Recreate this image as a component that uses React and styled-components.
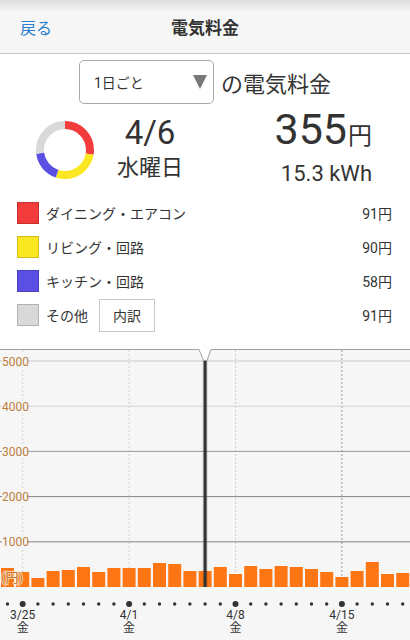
import React from 'react';
import styled, { createGlobalStyle } from 'styled-components';

const GlobalStyle = createGlobalStyle`
  html, body {
    margin: 0;
    padding: 0;
    background: #fff;
  }
  body {
    font-family: Roboto, "Noto Sans CJK JP", sans-serif;
    color: #333;
  }
`;

const Page = styled.div`
  width: 410px;
  height: 640px;
  overflow: hidden;
  display: flex;
  flex-direction: column;
  background: #fff;
`;

const Header = styled.header`
  height: 53px;
  flex-shrink: 0;
  display: grid;
  grid-template-columns: 1fr auto 1fr;
  align-items: center;
  background: linear-gradient(#dcdcdc, #f6f6f6 12px, #f7f7f7);
  border-bottom: 1px solid #c8c8c8;
`;

const BackLink = styled.a`
  justify-self: start;
  padding-left: 20px;
  font-size: 16px;
  color: #2b7fcf;
  text-decoration: none;
`;

const Title = styled.h1`
  margin: 0;
  font-size: 17px;
  font-weight: bold;
  color: #333;
`;

const PeriodRow = styled.div`
  display: flex;
  justify-content: center;
  align-items: center;
  gap: 7px;
  padding-top: 6px;
`;

const Select = styled.div`
  width: 135px;
  height: 44px;
  box-sizing: border-box;
  display: flex;
  align-items: center;
  justify-content: space-between;
  padding: 0 6px 0 14px;
  border: 1px solid #aaa;
  border-radius: 5px;
  font-size: 14px;
  color: #333;
`;

const Caret = styled.span`
  width: 0;
  height: 0;
  border-left: 7px solid transparent;
  border-right: 7px solid transparent;
  border-top: 14px solid #777;
`;

const PeriodLabel = styled.span`
  font-size: 22px;
  color: #333;
`;

const Summary = styled.section`
  height: 92px;
  display: flex;
  align-items: center;
  padding-left: 36px;
`;

const DateBlock = styled.div`
  width: 112px;
  display: flex;
  flex-direction: column;
  align-items: center;
  line-height: 1;
`;

const DateNum = styled.div`
  font-size: 33px;
  margin-top: -6px;
`;

const Weekday = styled.div`
  font-size: 22px;
  margin-top: 8px;
`;

const CostBlock = styled.div`
  flex: 1;
  display: flex;
  flex-direction: column;
  align-items: flex-end;
  padding-right: 38px;
  line-height: 1;
`;

const Cost = styled.div`
  font-size: 43px;
  margin-top: -8px;
`;

const Unit = styled.span`
  font-size: 24px;
  margin-left: 1px;
`;

const Energy = styled.div`
  font-size: 22px;
  margin-top: 12px;
`;

const Legend = styled.ul`
  list-style: none;
  margin: 0;
  padding: 0;
`;

const LegendRow = styled.li`
  height: 34px;
  display: flex;
  align-items: center;
  padding: 0 18px 0 17px;
  font-size: 14px;
`;

const Swatch = styled.span`
  width: 22px;
  height: 22px;
  box-sizing: border-box;
  background: ${p => p.$color};
  border: 1px solid rgba(0, 0, 0, 0.18);
`;

const Label = styled.span`
  margin-left: 7px;
`;

const Value = styled.span`
  margin-left: auto;
`;

const DetailButton = styled.button`
  margin-left: 11px;
  width: 56px;
  height: 33px;
  background: #fff;
  border: 1px solid #c8c8c8;
  border-radius: 0;
  font-family: inherit;
  font-size: 14px;
  color: #333;
  padding: 0;
`;

const ChartWrap = styled.div`
  margin-top: 17px;
  flex: 1;
`;

const ChartSvg = styled.svg`
  display: block;
  font-family: Roboto, "Noto Sans CJK JP", sans-serif;
`;

const parts = [
  { name: 'ダイニング・エアコン', color: '#f23b3b', value: 91 },
  { name: 'リビング・回路', color: '#fbe822', value: 90 },
  { name: 'キッチン・回路', color: '#5b4fe3', value: 58 },
  { name: 'その他', color: '#d9d9d9', value: 91, detail: true },
];

function Donut() {
  const r = 25;
  const c = 2 * Math.PI * r;
  const total = parts.reduce((s, p) => s + p.value, 0);
  let offset = 0;
  return (
    <svg width="58" height="58" viewBox="0 0 58 58">
      <g transform="rotate(-90 29 29)">
        {parts.map(p => {
          const len = (p.value / total) * c;
          const el = (
            <circle
              key={p.name}
              cx="29"
              cy="29"
              r={r}
              fill="none"
              stroke={p.color}
              strokeWidth="8"
              strokeDasharray={`${len} ${c - len}`}
              strokeDashoffset={-offset}
            />
          );
          offset += len;
          return el;
        })}
      </g>
    </svg>
  );
}

// daily cost in yen, from 3/24
const daily = [420, 330, 200, 355, 380, 445, 330, 420, 420, 420, 530, 510, 355, 355, 445, 290, 465, 400, 465, 445, 400, 330, 220, 355, 555, 290, 310];
const marks = { 1: ['3/25', '金'], 8: ['4/1', '金'], 15: ['4/8', '金'], 22: ['4/15', '金'] };
const selected = 13;
const ticks = [
  { v: 5000, color: '#c9c9c9' },
  { v: 4000, color: '#d2d2d2' },
  { v: 3000, color: '#9a9a9a' },
  { v: 2000, color: '#858585' },
  { v: 1000, color: '#858585' },
];

function Chart() {
  const base = 238;
  const scale = 45.2 / 1000;
  const step = 15.2;
  const cx = i => 7.5 + step * i;
  return (
    <ChartSvg width="410" height="291" viewBox="0 0 410 291">
      <path d="M0 0.5 H199 L203.5 11.5 H207 L211 0.5 H410 V291 H0 Z" fill="#f6f6f6" />
      {Object.keys(marks).map(k => (
        <line
          key={k}
          x1={cx(+k)}
          x2={cx(+k)}
          y1="1"
          y2={base}
          stroke={k === '22' ? '#999' : '#cfcfcf'}
          strokeDasharray="2 2"
        />
      ))}
      {ticks.map(t => {
        const y = base - t.v * scale;
        return (
          <g key={t.v}>
            <line x1="0" x2="410" y1={y} y2={y} stroke={t.color} />
            <rect x="2" y={y - 7} width="25" height="14" fill="#f6f6f6" />
            <text x="2" y={y + 4.5} fontSize="12" fill="#bd7d3c">{t.v}</text>
          </g>
        );
      })}
      {daily.map((v, i) => {
        const h = Math.round(v * scale);
        return <rect key={i} x={1 + step * i} y={base - h} width="13" height={h} fill="#fd7613" />;
      })}
      <text
        x="1"
        y="233"
        fontSize="13"
        fill="#c57634"
        stroke="rgba(255,235,215,0.8)"
        strokeWidth="2"
        paintOrder="stroke"
      >(円)</text>
      <line x1={cx(selected)} x2={cx(selected)} y1="11" y2={base} stroke="rgba(0,0,0,0.15)" strokeWidth="5" />
      <line x1={cx(selected)} x2={cx(selected)} y1="11" y2={base} stroke="#333" strokeWidth="3" />
      <path d="M0 0.5 H199 L203.5 11.5 H207 L211 0.5 H410" fill="none" stroke="#a0a0a0" />
      {daily.map((v, i) => (
        <circle key={i} cx={cx(i)} cy="255" r={marks[i] ? 3 : 1.7} fill="#333" />
      ))}
      {Object.entries(marks).map(([k, [d, w]]) => (
        <g key={k} textAnchor="middle" fontSize="12" fill="#333">
          <text x={cx(+k)} y="270">{d}</text>
          <text x={cx(+k)} y="283">{w}</text>
        </g>
      ))}
    </ChartSvg>
  );
}

export default function App() {
  return (
    <Page>
      <GlobalStyle />
      <Header>
        <BackLink href="#">戻る</BackLink>
        <Title>電気料金</Title>
        <span />
      </Header>
      <PeriodRow>
        <Select>
          <span>1日ごと</span>
          <Caret />
        </Select>
        <PeriodLabel>の電気料金</PeriodLabel>
      </PeriodRow>
      <Summary>
        <Donut />
        <DateBlock>
          <DateNum>4/6</DateNum>
          <Weekday>水曜日</Weekday>
        </DateBlock>
        <CostBlock>
          <Cost>355<Unit>円</Unit></Cost>
          <Energy>15.3 kWh</Energy>
        </CostBlock>
      </Summary>
      <Legend>
        {parts.map(p => (
          <LegendRow key={p.name}>
            <Swatch $color={p.color} />
            <Label>{p.name}</Label>
            {p.detail && <DetailButton>内訳</DetailButton>}
            <Value>{p.value}円</Value>
          </LegendRow>
        ))}
      </Legend>
      <ChartWrap>
        <Chart />
      </ChartWrap>
    </Page>
  );
}
